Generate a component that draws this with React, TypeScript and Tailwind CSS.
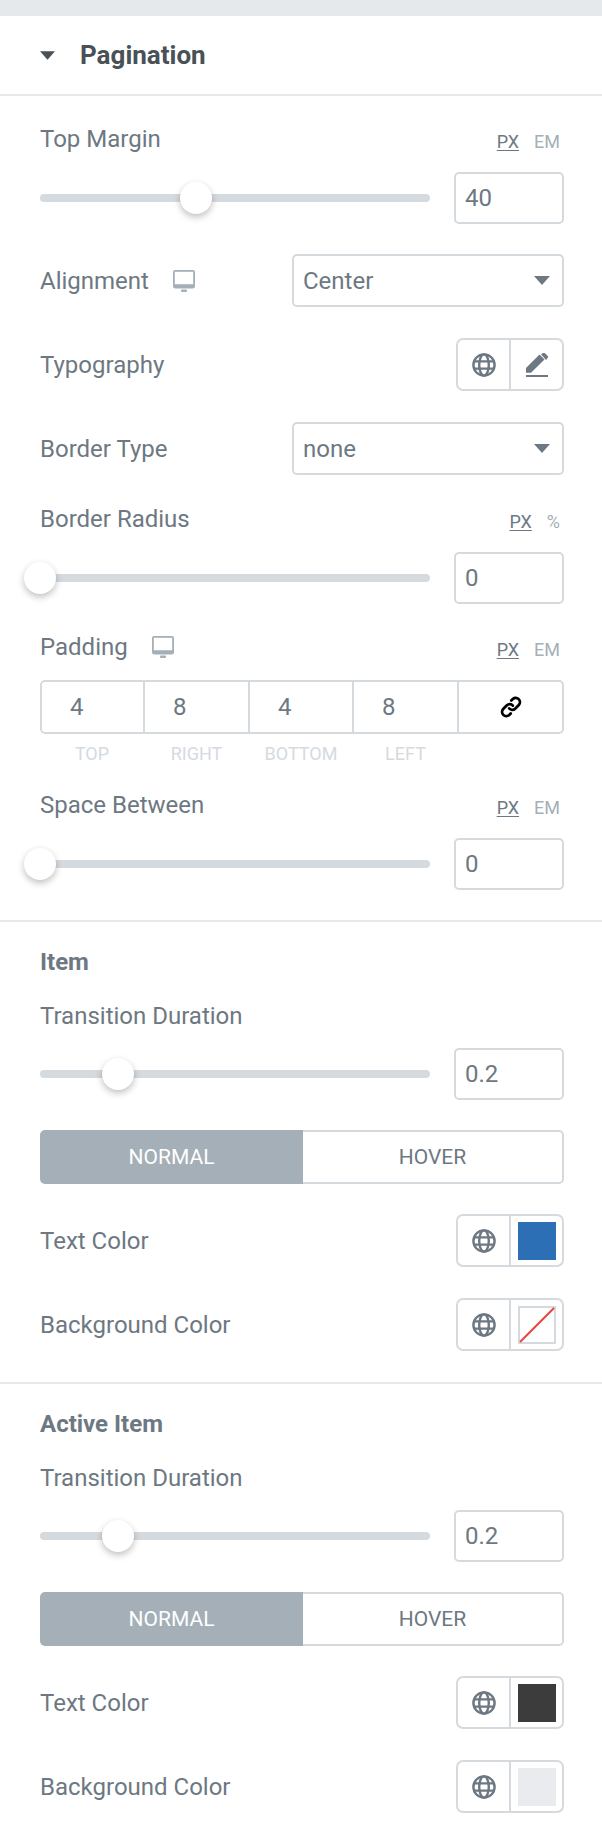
import type { ReactNode } from 'react'

const Globe = () => (
  <svg viewBox="0 0 24 24" className="w-6 h-6" fill="none" stroke="#6d7882" strokeWidth="2.4">
    <circle cx="12" cy="12" r="10.6" />
    <ellipse cx="12" cy="12" rx="4.8" ry="10.6" />
    <path d="M2 8.4h20M2 15.6h20" />
  </svg>
)

const Pencil = () => (
  <svg viewBox="0 0 24 24" className="w-6 h-6" fill="#6d7882">
    <path d="M1 16.5 14.5 3l5 5L6 21.2H1z" transform="translate(0 -1.5)" />
    <path d="M16 1.2 18 0c.6-.3 1.2-.3 1.7.1l3 3c.5.5.5 1.2.1 1.7L21 7z" />
    <rect x="1" y="22" width="22" height="2" />
  </svg>
)

const Monitor = () => (
  <svg viewBox="0 0 22 22" className="w-[22px] h-[22px]" fill="#a4afb7">
    <path d="M2 0h18a2 2 0 0 1 2 2v14a2.500 2.500 0 0 1-2.500 2.500h-17A2.500 2.500 0 0 1 0 16V2a2 2 0 0 1 2-2zM1.800 1.800v12.400h18.400V1.800z" fillRule="evenodd" />
    <rect x="8" y="19.500" width="6" height="2.500" rx="1" />
  </svg>
)

const LinkIcon = () => (
  <svg viewBox="0 0 24 24" className="w-[22px] h-[22px]" fill="none" stroke="#000" strokeWidth="3" strokeLinecap="round">
    <path d="M10 13.500a4.500 4.500 0 0 0 6.500.3l4-4a4.600 4.600 0 0 0-6.500-6.500l-1.700 1.700" />
    <path d="M14 10.500a4.500 4.500 0 0 0-6.500-.3l-4 4a4.600 4.600 0 0 0 6.500 6.500l1.700-1.700" />
  </svg>
)

const Caret = ({ className }: { className: string }) => (
  <svg viewBox="0 0 16 9" className={className} fill="currentColor">
    <path d="M0 0h16L8 9z" />
  </svg>
)

function Label({ children, className = '' }: { children: ReactNode; className?: string }) {
  return <div className={`text-[24px] leading-[28px] text-[#6d7882] ${className}`}>{children}</div>
}

function Units({ second }: { second: string }) {
  return (
    <div className="flex gap-[15px] pr-[4px] text-[18px] leading-[20px] text-[#a4afb7] mt-[7px]">
      <span className="underline text-[#6d7882] underline-offset-2">PX</span>
      <span>{second}</span>
    </div>
  )
}

function SliderRow({ pos, value, className = '' }: { pos: number; value: string; className?: string }) {
  return (
    <div className={`flex items-center justify-between ${className}`}>
      <div className="relative w-[390px] h-2 rounded-full bg-[#d5dadf]">
        <div
          className="absolute top-1/2 -translate-x-1/2 -translate-y-1/2 w-8 h-8 rounded-full bg-white shadow-[0_3px_7px_rgba(0,0,0,0.25)]"
          style={{ left: pos }}
        />
      </div>
      <div className="w-[110px] h-[52px] border-2 border-[#d5dadf] rounded-[5px] flex items-center pl-[9px] text-[24px] text-[#6d7882]">
        {value}
      </div>
    </div>
  )
}

function SelectRow({ label, value, monitor, className = '' }: { label: string; value: string; monitor?: boolean; className?: string }) {
  return (
    <div className={`flex items-center justify-between ${className}`}>
      <div className="flex items-center gap-[24px]">
        <Label>{label}</Label>
        {monitor && <Monitor />}
      </div>
      <div className="w-[272px] h-[53px] border-2 border-[#d5dadf] rounded-[5px] flex items-center justify-between pl-[9px] pr-[12px] text-[24px] text-[#6d7882]">
        {value}
        <Caret className="w-4 h-[9px] text-[#6d7882]" />
      </div>
    </div>
  )
}

function PopoverRow({ label, children, className = '' }: { label: string; children: ReactNode; className?: string }) {
  return (
    <div className={`flex items-center justify-between ${className}`}>
      <Label>{label}</Label>
      <div className="w-[108px] h-[53px] border-2 border-[#d5dadf] rounded-[7px] flex">
        <div className="w-[53px] border-r-2 border-[#d5dadf] flex items-center justify-center">
          <Globe />
        </div>
        <div className="flex-1 flex items-center justify-center">{children}</div>
      </div>
    </div>
  )
}

function Tabs({ className = '' }: { className?: string }) {
  return (
    <div className={`flex h-[54px] text-[21px] text-[#6d7882] ${className}`}>
      <div className="w-[263px] pt-[1px] rounded-l-[5px] bg-[#a4afb7] text-white flex items-center justify-center">NORMAL</div>
      <div className="flex-1 pt-[1px] border-2 border-l-0 border-[#d5dadf] rounded-r-[5px] flex items-center justify-center">HOVER</div>
    </div>
  )
}

const dimensions = [
  { value: '4', name: 'TOP', width: 'w-[103px]', labelWidth: 'w-[104px]' },
  { value: '8', name: 'RIGHT', width: 'w-[105px]', labelWidth: 'w-[105px]' },
  { value: '4', name: 'BOTTOM', width: 'w-[104px]', labelWidth: 'w-[104px]' },
  { value: '8', name: 'LEFT', width: 'w-[105px]', labelWidth: 'w-[105px]' }
]

export default function App() {
  return (
    <div className="w-[602px] h-[1838px] bg-white overflow-hidden font-['Roboto',sans-serif]">
      <div className="h-4 bg-[#e6e9ec]" />
      <div className="h-[80px] border-b-2 border-[#e6e9ec] flex items-center pl-10">
        <Caret className="w-[15px] h-[9px] text-[#495157]" />
        <span className="ml-[25px] text-[26px] font-bold text-[#495157]">Pagination</span>
      </div>

      <div className="pl-10 pr-[38px] pt-[29px] h-[826px] border-b-2 border-[#e6e9ec]">
        <div className="flex justify-between">
          <Label>Top Margin</Label>
          <Units second="EM" />
        </div>
        <SliderRow pos={156} value="40" className="mt-[19px]" />
        <SelectRow label="Alignment" value="Center" monitor className="mt-[30px]" />
        <PopoverRow label="Typography" className="mt-[31px]">
          <Pencil />
        </PopoverRow>
        <SelectRow label="Border Type" value="none" className="mt-[31px]" />
        <div className="flex justify-between mt-[30px]">
          <Label>Border Radius</Label>
          <Units second="%" />
        </div>
        <SliderRow pos={0} value="0" className="mt-[19px]" />
        <div className="flex justify-between mt-[29px]">
          <div className="flex items-center gap-[24px]">
            <Label>Padding</Label>
            <Monitor />
          </div>
          <Units second="EM" />
        </div>
        <div className="flex h-[54px] mt-[19px] border-2 border-[#d5dadf] rounded-[5px]">
          {dimensions.map((d) => (
            <div key={d.name} className={`${d.width} border-r-2 border-[#d5dadf] flex items-center pl-[28px] text-[24px] text-[#6d7882]`}>
              {d.value}
            </div>
          ))}
          <div className="flex-1 flex items-center justify-center">
            <LinkIcon />
          </div>
        </div>
        <div className="flex mt-[10px] text-[18px] leading-[20px] text-[#d5dadf]">
          {dimensions.map((d) => (
            <div key={d.name} className={`${d.labelWidth} text-center`}>
              {d.name}
            </div>
          ))}
        </div>
        <div className="flex justify-between mt-[27px]">
          <Label>Space Between</Label>
          <Units second="EM" />
        </div>
        <SliderRow pos={0} value="0" className="mt-[19px]" />
      </div>

      <div className="pl-10 pr-[38px] pt-[27px] h-[462px] border-b-2 border-[#e6e9ec]">
        <div className="text-[24px] leading-[26px] font-bold text-[#6d7882]">Item</div>
        <Label className="mt-[27px]">Transition Duration</Label>
        <SliderRow pos={78} value="0.2" className="mt-[18px]" />
        <Tabs className="mt-[30px]" />
        <PopoverRow label="Text Color" className="mt-[30px]">
          <div className="w-[38px] h-[38px] bg-[#2d6fb5]" />
        </PopoverRow>
        <PopoverRow label="Background Color" className="mt-[31px]">
          <svg viewBox="0 0 38 38" className="w-[38px] h-[38px]">
            <rect x="1" y="1" width="36" height="36" fill="#fff" stroke="#d5dadf" strokeWidth="2" />
            <path d="M2 36 36 2" stroke="#e8453c" strokeWidth="2" />
          </svg>
        </PopoverRow>
      </div>

      <div className="pl-10 pr-[38px] pt-[27px]">
        <div className="text-[24px] leading-[26px] font-bold text-[#6d7882]">Active Item</div>
        <Label className="mt-[27px]">Transition Duration</Label>
        <SliderRow pos={78} value="0.2" className="mt-[18px]" />
        <Tabs className="mt-[30px]" />
        <PopoverRow label="Text Color" className="mt-[30px]">
          <div className="w-[38px] h-[38px] bg-[#3c3c3c]" />
        </PopoverRow>
        <PopoverRow label="Background Color" className="mt-[31px]">
          <div className="w-[38px] h-[38px] bg-[#e9ebee]" />
        </PopoverRow>
      </div>
    </div>
  )
}
